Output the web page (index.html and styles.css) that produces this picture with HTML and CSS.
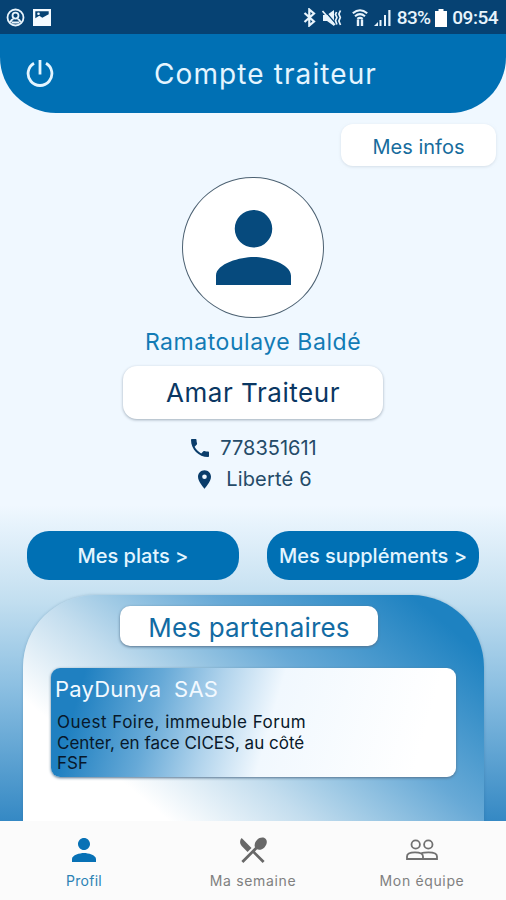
FILE: index.html
```html
<!DOCTYPE html>
<html lang="fr">
<head>
<meta charset="utf-8">
<title>Compte traiteur</title>
<link rel="stylesheet" href="styles.css">
</head>
<body>
<div class="app">
  <div class="status">
    <div class="status-left">
      <svg width="19" height="19" viewBox="0 0 19 19" fill="none" stroke="#e8f4fc" stroke-width="1.8"><circle cx="9.5" cy="9.5" r="8"/><circle cx="9.5" cy="7.6" r="3"/><path d="M4.5 14.5Q5 11.5 7.5 11.2M14.5 14.5Q14 11.5 11.5 11.2M6 14.5h7"/></svg>
      <svg width="18" height="17" viewBox="0 0 18 17"><path fill="#f4faff" fill-rule="evenodd" d="M0 0h18v17H0zM2.3 2.3v7l4-2.500 3 2 6.400-3.600V2.3z"/><circle cx="5.500" cy="4.800" r="1.300" fill="#f4faff"/></svg>
    </div>
    <div class="status-right">
      <svg class="bt" width="13" height="19" viewBox="0 0 13 19" fill="none" stroke="#e8f4fc" stroke-width="2.200"><path d="M1.500 5l9.500 8.500-4.700 4V1.500l4.700 4-9.500 8.500"/></svg>
      <svg class="mute" width="20" height="18" viewBox="0 0 20 18"><path fill="#e8f4fc" d="M1 6h4l7-5v16l-7-5H1z"/><path d="M2 1l12 14" stroke="#064273" stroke-width="1.300"/><path d="M.5 2l12.500 14" stroke="#e8f4fc" stroke-width="1.600"/><path d="M14.500 3l-1 2.500 1.400 3-1.400 3 1.400 4M18.500 1.500l-1.600 3.500 1.400 3.500-1.400 3.500 1.600 4" fill="none" stroke="#e8f4fc" stroke-width="1.700"/></svg>
      <svg class="wifi" width="16" height="18" viewBox="0 0 16 18" fill="none" stroke="#e8f4fc"><path d="M.8 4.300Q8-1.800 15.200 4.300M3 7.200Q8 3 13 7.200M5.300 9.800Q8 7.800 10.700 9.800" stroke-width="2.100"/><path d="M6 10.500V17M10 17v-6.500" stroke-width="2.400"/></svg>
      <svg class="signal" width="17" height="18" viewBox="0 0 17 18" fill="#e8f4fc"><path d="M0 17l4-4v4zM5.500 11h2v6h-2zM10 6h2v11h-2zM14.300 1h2.200v16h-2.200z"/></svg>
      <span class="pct">83%</span>
      <svg class="battery" width="12" height="18" viewBox="0 0 12 18"><path d="M3.500 0h5v2H12v16H0V2h3.500z" fill="#fff"/></svg>
      <span class="clock">09:54</span>
    </div>
  </div>
  <header class="header">
    <svg width="28" height="28" viewBox="0 0 28 28" fill="none" stroke="#e4f5ff" stroke-width="2.800"><path d="M14 1v14.500M8 4.300A11.900 11.900 0 1 0 20 4.300"/></svg>
    <h1><span>Compte traiteur</span></h1>
  </header>
  <main class="content">
    <div class="infos-row"><div class="infos"><span>Mes infos</span></div></div>
    <div class="avatar"><svg width="75" height="75" viewBox="4 4 16 16" fill="#064a7d"><path d="M12 12c2.210 0 4-1.790 4-4s-1.790-4-4-4-4 1.790-4 4 1.790 4 4 4zm0 2c-2.670 0-8 1.340-8 4v2h16v-2c0-2.660-5.330-4-8-4z"/></svg></div>
    <div class="name"><span>Ramatoulaye Baldé</span></div>
    <div class="company"><span>Amar Traiteur</span></div>
    <div class="contact phone"><svg width="18" height="18" viewBox="3 3 18 18" fill="#0a3d6b"><path d="M6.620 10.790c1.440 2.830 3.760 5.140 6.590 6.590l2.200-2.200c.27-.27.67-.36 1.020-.24 1.120.37 2.330.57 3.570.57.55 0 1 .45 1 1V20c0 .55-.45 1-1 1C10.610 21 3 13.390 3 4c0-.55.45-1 1-1h3.500c.55 0 1 .45 1 1 0 1.250.2 2.450.57 3.570.11.35.03.74-.25 1.020l-2.200 2.200z"/></svg><span>778351611</span></div>
    <div class="contact place"><svg width="13" height="19" viewBox="5 2 14 20" fill="#0a3d6b"><path d="M12 2C8.130 2 5 5.130 5 9c0 5.250 7 13 7 13s7-7.750 7-13c0-3.870-3.130-7-7-7zm0 9.500A2.500 2.500 0 1 1 12 6.500a2.500 2.500 0 0 1 0 5z"/></svg><span>Liberté 6</span></div>
    <div class="actions"><div class="action plats"><span>Mes plats &gt;</span></div><div class="action supp"><span>Mes suppléments &gt;</span></div></div>
    <section class="panel">
      <h2><span>Mes partenaires</span></h2>
      <article class="partner">
        <h3>PayDunya&nbsp; SAS</h3>
        <p><span class="l1">Ouest Foire, immeuble Forum</span><br><span class="l2">Center, en face CICES, au côté</span><br><span class="l3">FSF</span></p>
      </article>
    </section>
  </main>
  <nav class="nav">
    <div class="tab active"><svg width="24" height="24" viewBox="4 4 16 16" fill="#0871b5"><path d="M12 12c2.210 0 4-1.790 4-4s-1.790-4-4-4-4 1.790-4 4 1.790 4 4 4zm0 2c-2.670 0-8 1.340-8 4v2h16v-2c0-2.660-5.330-4-8-4z"/></svg><span>Profil</span></div>
    <div class="tab"><svg width="28" height="28" viewBox="2 2 20 20" fill="#686868"><path d="M8.100 13.340l2.830-2.830L3.910 3.500a4.008 4.008 0 0 0 0 5.660l4.190 4.180zm6.780-1.810c1.530.71 3.680.21 5.270-1.380 1.910-1.910 2.280-4.650.81-6.120-1.460-1.460-4.200-1.100-6.120.81-1.590 1.590-2.090 3.740-1.380 5.270L3.700 19.870l1.410 1.410L12 14.410l6.880 6.880 1.410-1.410L13.410 13l1.470-1.470z"/></svg><span>Ma semaine</span></div>
    <div class="tab team"><svg width="32" height="22" viewBox="0 0 32 22" fill="none" stroke="#707070" stroke-width="1.800"><circle cx="9.700" cy="5.500" r="4.200"/><circle cx="22.300" cy="5.500" r="4.200"/><path d="M1 20v-2.500c0-3 4-4.200 8-4.200s8 1.200 8 4.200V20zM15.500 14c1.500-.5 4-.7 7-.7 4.500 0 8.500 1.200 8.500 4.200V20H17"/></svg><span>Mon équipe</span></div>
  </nav>
</div>
</body>
</html>
```
FILE: styles.css
```css
* { box-sizing: border-box; }
body { margin: 0; font-family: Inter, "Liberation Sans", sans-serif; }
h1, h2, h3, p { margin: 0; font-weight: 400; }
svg { flex: none; display: block; }
span { white-space: nowrap; }
.app { width: 506px; height: 900px; overflow: hidden; display: flex; flex-direction: column; background: linear-gradient(#f0f8ff 0 505px, #c3dff0 600px, #8dc0e2 685px, #3287c3 825px); }
.status { height: 34px; flex: none; background: #064273; display: flex; justify-content: space-between; padding: 1px 8px 0 6px; color: #e8f4fc; font-family: Roboto, sans-serif; font-size: 19px; font-weight: 500; }
.status-left, .status-right { display: flex; align-items: center; }
.status-left { gap: 8px; }
.bt { margin-right: 6px; }
.mute { margin-right: 10px; }
.wifi { margin-right: 6px; }
.signal { margin-right: 6px; }
.pct { letter-spacing: -.7px; }
.clock { letter-spacing: -.5px; }
.battery { margin: 0 5px 0 5px; }
.header { height: 79px; flex: none; background: #0070b4; border-radius: 0 0 56px 56px; display: flex; align-items: center; padding: 0 0 2px 26px; color: #e4f5ff; }
.header h1 { margin-left: 100px; padding-top: 2px; font-size: 28px; line-height: 40px; letter-spacing: 1.100px; }
.content { flex: 1; min-height: 0; display: flex; flex-direction: column; align-items: center; overflow: hidden; }
.infos-row { align-self: stretch; display: flex; justify-content: flex-end; padding: 11px 10px 0; }
.infos { width: 155px; height: 42px; border-radius: 12px; background: #fff; box-shadow: 0 1px 3px #bcc8d388; display: flex; align-items: center; justify-content: center; font-size: 20px; color: #176c9d; padding-top: 3px; }
.avatar { margin-top: 11px; width: 142px; height: 142px; border: 1px solid #4c6172; border-radius: 50%; background: #fff; display: flex; align-items: center; justify-content: center; }
.name { margin-top: 9px; height: 30px; line-height: 30px; font-size: 23px; color: #127bb5; letter-spacing: .55px; }
.company { margin-top: 9px; width: 260px; height: 53px; border-radius: 14px; background: #fff; box-shadow: 0 1px 3px #9fadba; display: flex; align-items: center; justify-content: center; font-size: 26px; color: #0a3763; letter-spacing: .55px; }
.contact { display: flex; align-items: center; height: 30px; font-size: 20px; color: #254b68; }
.phone { margin-top: 14px; gap: 11px; margin-left: 2px; }
.place { margin-top: 1px; gap: 15px; margin-left: 4px; letter-spacing: .2px; }
.actions { display: flex; gap: 28px; margin-top: 37px; }
.action { width: 212px; height: 49px; border-radius: 22px; background: #0070b4; color: #e4f5ff; font-size: 20px; font-weight: 500; display: flex; align-items: center; justify-content: center; }
.panel { width: 461px; height: 226px; flex: none; margin: 15px 0 0 1px; border-radius: 72px 72px 0 0; background: linear-gradient(40deg, #fff 20%, #c3ddee 39%, #a0cae5 48%, #67a9d6 63%, #1e82c1 90%); box-shadow: 0 0 3px #1c4d7444; padding-top: 11px; }
.panel h2 { margin: 0 0 0 97px; width: 258px; height: 40px; border-radius: 10px; background: #fff; box-shadow: 0 1px 3px #54728d; display: flex; align-items: center; justify-content: center; font-size: 26px; color: #126ba3; padding-top: 2px; letter-spacing: .2px; }
.partner { margin: 22px 0 0 28px; width: 405px; height: 109px; border-radius: 9px; background: linear-gradient(106deg, #1f80c1 8%, #66a9d7 26%, #b0d3ec 40%, #f1f8fe 54%, #fff 90%); box-shadow: 0 1px 3px #54728d; padding: 6px 0 0 4px; }
.partner h3 { font-size: 22px; line-height: 30px; color: #f2f9ff; letter-spacing: .2px; }
.partner p { margin: 8px 0 0 2px; font-size: 17px; line-height: 20.700px; color: #08182a; }
.l1 { letter-spacing: .5px; }
.nav { height: 79px; flex: none; background: #fbfbfb; display: grid; grid-template-columns: 168px 170px 168px; }
.tab { display: flex; flex-direction: column; align-items: center; color: #808080; font-size: 14px; justify-content: space-between; padding: 15px 0 9px; letter-spacing: .65px; }
.tab.active { color: #2b82b4; padding-top: 17px; letter-spacing: .3px; }
.tab.team { padding-top: 18px; }
.tab span { line-height: 20px; }
```
